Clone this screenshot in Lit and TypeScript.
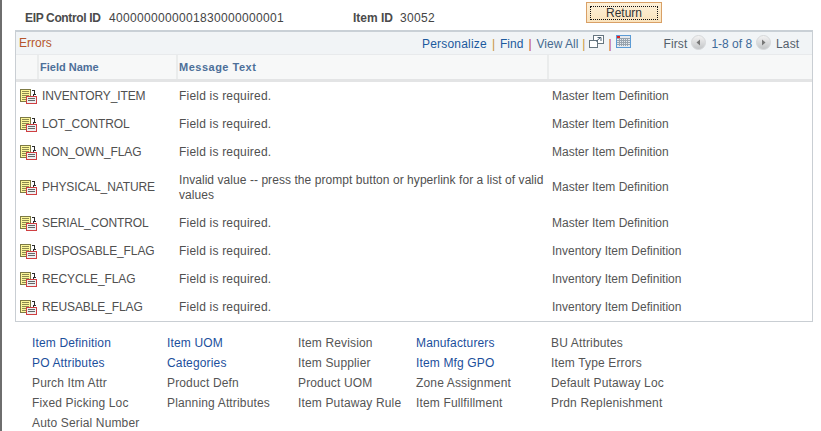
import { LitElement, html, css, svg } from "lit";
import { customElement } from "lit/decorators.js";

const rows: [string, string, string][] = [
  ["INVENTORY_ITEM", "Field is required.", "Master Item Definition"],
  ["LOT_CONTROL", "Field is required.", "Master Item Definition"],
  ["NON_OWN_FLAG", "Field is required.", "Master Item Definition"],
  ["PHYSICAL_NATURE", "Invalid value -- press the prompt button or hyperlink for a list of valid values", "Master Item Definition"],
  ["SERIAL_CONTROL", "Field is required.", "Master Item Definition"],
  ["DISPOSABLE_FLAG", "Field is required.", "Inventory Item Definition"],
  ["RECYCLE_FLAG", "Field is required.", "Inventory Item Definition"],
  ["REUSABLE_FLAG", "Field is required.", "Inventory Item Definition"],
];

const links: [string, boolean][][] = [
  [["Item Definition", true], ["PO Attributes", true], ["Purch Itm Attr", false], ["Fixed Picking Loc", false], ["Auto Serial Number", false]],
  [["Item UOM", true], ["Categories", true], ["Product Defn", false], ["Planning Attributes", false]],
  [["Item Revision", false], ["Item Supplier", false], ["Product UOM", false], ["Item Putaway Rule", false]],
  [["Manufacturers", true], ["Item Mfg GPO", true], ["Zone Assignment", false], ["Item Fullfillment", false]],
  [["BU Attributes", false], ["Item Type Errors", false], ["Default Putaway Loc", false], ["Prdn Replenishment", false]],
];

const rowIcon = svg`<svg class="ricon" width="17" height="15" viewBox="0 0 17 15" shape-rendering="crispEdges">
  <rect x="0.5" y="0.5" width="10" height="12" fill="#fdf79a" stroke="#7d7a45"/>
  <path d="M2 2.5h7M2 4.5h7M2 6.5h7M2 8.5h4M2 10.5h4" stroke="#8d8a50" fill="none"/>
  <path d="M12 1.5h2v4M12.5 5.5h3M13 6.5h1" stroke="#2b2b2b" fill="none"/>
  <rect x="6.5" y="7.5" width="10" height="7" fill="#eceff1" stroke="#cf3f42"/>
  <path d="M8 9.5h7M8 11.5h7" stroke="#666" fill="none"/>
</svg>`;

const popIcon = svg`<svg width="15" height="13" viewBox="0 0 15 13" shape-rendering="crispEdges">
  <rect x="4.5" y="0.5" width="10" height="8" fill="#fff" stroke="#66757f"/>
  <rect x="0.5" y="5.5" width="8" height="7" fill="#fff" stroke="#66757f"/>
  <path d="M7 6.5L11.5 2.5M8.5 2.5h3.5v3.5" stroke="#4c6274" fill="none" shape-rendering="auto"/>
</svg>`;

const gridIcon = svg`<svg width="15" height="13" viewBox="0 0 15 13" shape-rendering="crispEdges">
  <rect x="0.5" y="0.5" width="14" height="12" fill="#e4e9ee" stroke="#5b9bd5"/>
  <path d="M1 3.5h13M1 5.5h13M1 7.5h13M1 9.5h13M3.5 3v8M5.5 3v8M7.5 3v8M9.5 3v8M11.5 3v8" stroke="#98a3ad" fill="none"/>
  <rect x="1" y="1" width="3" height="2" fill="#e02020"/>
</svg>`;

const navIcon = (flip: boolean) => svg`<svg width="15" height="15" viewBox="0 0 15 15">
  <defs><linearGradient id="g${flip ? 1 : 0}" x1="0" y1="0" x2="0" y2="1"><stop offset="0" stop-color="#f4f4f4"/><stop offset="1" stop-color="#c2c4c6"/></linearGradient></defs>
  <circle cx="7.5" cy="7.5" r="7" fill="url(#g${flip ? 1 : 0})" stroke="#d6d8da"/>
  <path d="${flip ? "M6 4.5v6l3.5-3z" : "M9 4.5v6l-3.5-3z"}" fill="#777"/>
</svg>`;

@customElement("app-root")
export class AppRoot extends LitElement {
  static styles = css`
    :host {
      display: block;
      width: 821px;
      height: 431px;
      overflow: hidden;
      background: #fff;
      font-family: "Liberation Sans", Arial, sans-serif;
      font-size: 12px;
      color: #4a4a4a;
      box-sizing: border-box;
      border-left: 2px solid #6e6e6e;
    }
    .page { padding-left: 13px; width: 798px; }
    .top {
      height: 30px;
      display: flex;
      align-items: flex-start;
      color: #444;
    }
    .lbl { font-weight: bold; color: #4b4b4b; line-height: 14px; margin-top: 11px; white-space: nowrap; }
    .val { line-height: 14px; margin-top: 11px; letter-spacing: 0.33px; }
    .l1 { margin-left: 10px; width: 84px; letter-spacing: -0.35px; }
    .v1 { width: 244px; }
    .l2 { width: 47px; }
    .v2 { width: 186px; }
    .btn {
      width: 76px;
      height: 21px;
      margin-top: 2px;
      box-sizing: border-box;
      border: 1px solid #d9a066;
      background: linear-gradient(#fdf0d8, #fae3bd);
      padding: 3px 3px 2px;
      display: flex;
    }
    .btn span {
      flex: 1;
      border: 1px dotted #111;
      text-align: center;
      line-height: 12px;
      color: #333;
    }
    .grid {
      width: 798px;
      box-sizing: border-box;
      border: 1px solid #c9ced3;
      border-top: 2px solid #c9d0d6;
    }
    .title {
      height: 22px;
      background: #f1f4f6;
      display: flex;
      align-items: center;
      border-bottom: 1px solid #e8eaec;
    }
    .errors { color: #b5562b; margin-left: 3px; width: 403px; }
    .tools {
      display: flex;
      align-items: center;
      color: #2d5d94;
      white-space: nowrap;
      margin-top: 2px;
    }
    .tools a { color: #1c5a9e; }
    .tools a.pers { letter-spacing: 0.2px; }
    .tools a.view { color: #466a8f; }
    .sep { margin: 0 5px; color: #c8963e; }
    .sep.r { color: #c0453a; }
    .sep.c { margin: 0 4px; }
    .sep.d { margin: 0 4px; }
    .tools svg { display: block; margin-top: -6px; }
    .nav { display: flex; align-items: center; margin-left: 33px; gap: 4px; color: #54606b; }
    .nav a { color: #54606b; letter-spacing: 0.1px; }
    .nav a.last { margin-left: 1px; }
    .nav svg { margin-top: -4px; }
    .range { color: #3f6a99; margin-left: 1px; }
    .head, .row {
      display: grid;
      grid-template-columns: 23px 139px 371px 1fr;
    }
    .head {
      height: 24px;
      background: #f7f8f8;
      border-bottom: 3px solid #e3e4e5;
    }
    .head div {
      border-right: 2px solid #eaecec;
      font-weight: bold;
      font-size: 11px;
      color: #4d6f99;
      line-height: 24px;
      padding-left: 1px;
    }
    .head div.wide { letter-spacing: 0.5px; }
    .head div:last-child { border-right: 0; }
    .row { min-height: 28px; align-items: center; }
    .row > div { line-height: 15px; color: #505050; }
    .ic { padding-left: 4px; height: 15px; }
    .ricon { display: block; }
    .fld { padding-left: 3px; letter-spacing: -0.1px; }
    .msg { padding: 0 3px 0 1px; letter-spacing: 0.2px; }
    .tall .msg { letter-spacing: 0.06px; }
    .row .src { padding-left: 3px; color: #555; }
    .tall { min-height: 43px; }
    .links {
      display: grid;
      grid-template-columns: 135px 131px 118px 135px 1fr;
      margin: 11px 0 0 17px;
    }
    .col { display: flex; flex-direction: column; }
    .col span { height: 20px; line-height: 20px; color: #555; white-space: nowrap; letter-spacing: 0.15px; }
    .col span.on { color: #1c4f9c; }
  `;

  render() {
    return html`<div class="page">
      <div class="top">
        <div class="lbl l1">EIP Control ID</div>
        <div class="val v1">4000000000001830000000001</div>
        <div class="lbl l2">Item ID</div>
        <div class="val v2">30052</div>
        <div class="btn"><span>Return</span></div>
      </div>
      <div class="grid">
        <div class="title">
          <div class="errors">Errors</div>
          <div class="tools">
            <a class="pers">Personalize</a><span class="sep">|</span><a>Find</a><span class="sep r">|</span><a class="view">View All</a><span class="sep c">|</span>${popIcon}<span class="sep r d">|</span>${gridIcon}
            <div class="nav"><a>First</a>${navIcon(false)}<span class="range">1-8 of 8</span>${navIcon(true)}<a class="last">Last</a></div>
          </div>
        </div>
        <div class="head"><div></div><div>Field Name</div><div class="wide">Message Text</div><div></div></div>
        ${rows.map(
          (r) => html`<div class="row ${r[1].length > 30 ? "tall" : ""}">
            <div class="ic">${rowIcon}</div>
            <div class="fld">${r[0]}</div>
            <div class="msg">${r[1]}</div>
            <div class="src">${r[2]}</div>
          </div>`
        )}
      </div>
      <div class="links">
        ${links.map(
          (c) => html`<div class="col">${c.map((l) => html`<span class="${l[1] ? "on" : ""}">${l[0]}</span>`)}</div>`
        )}
      </div>
    </div>`;
  }
}
